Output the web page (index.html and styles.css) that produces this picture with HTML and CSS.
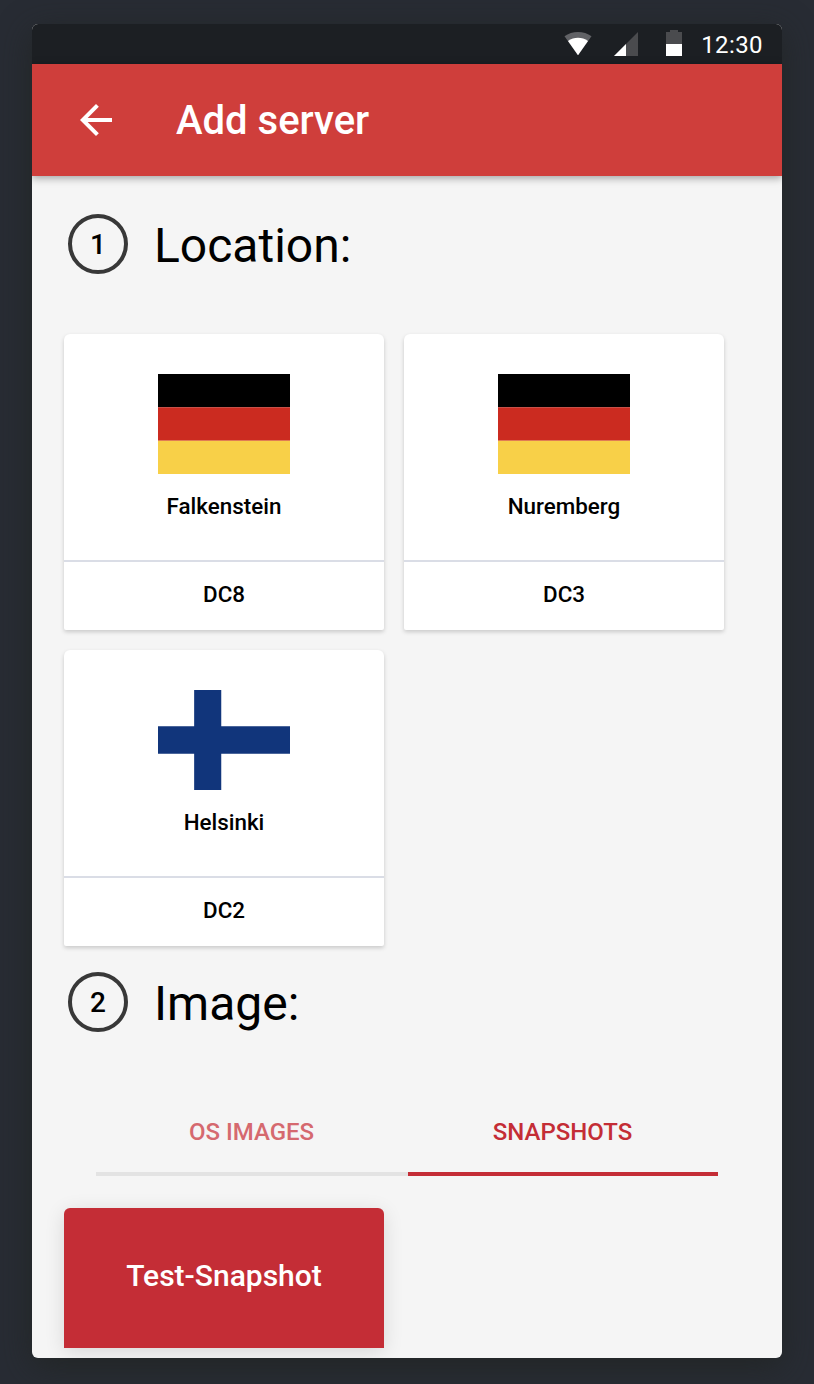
FILE: index.html
```html
<!DOCTYPE html>
<html lang="en">
<head>
<meta charset="utf-8">
<title>Add server</title>
<link rel="stylesheet" href="styles.css">
</head>
<body>
<main class="phone">
  <div class="status-bar">
    <svg class="icon-wifi" width="28" height="24" viewBox="0 0 28 24" aria-hidden="true">
      <path d="M.5 4.3C8-1.4 20-1.4 27.500 4.300L14 23.200Z" fill="#616266"/>
      <path d="M4 9C10 4.700 18 4.700 24 9L14 23.200Z" fill="#fff"/>
    </svg>
    <svg class="icon-signal" width="24" height="24" viewBox="0 0 24 24" aria-hidden="true">
      <path d="M0 24 24 0V24Z" fill="#4a4b4e"/>
      <path d="M0 24 12 12V24Z" fill="#fff"/>
    </svg>
    <svg class="icon-battery" width="16" height="26" viewBox="0 0 16 26" aria-hidden="true">
      <path d="M4 0H12V2H16V14H0V2H4Z" fill="#4a4b4e"/>
      <path d="M0 14H16V26H0Z" fill="#fff"/>
    </svg>
    <span class="clock">12:30</span>
  </div>
  <header class="app-bar">
    <svg class="back" width="32" height="32" viewBox="0 0 32 32" aria-hidden="true">
      <path d="M32 14H7.660L18.840 2.820 16 0 0 16 16 32 18.820 29.180 7.660 18H32Z" fill="#fff"/>
    </svg>
    <h1 class="title">Add server</h1>
  </header>
  <div class="content">
    <section>
      <h2 class="step"><span class="step-number">1</span><span class="step-label">Location:</span></h2>
      <div class="cards">
        <article class="card">
          <div class="card-body">
            <svg class="flag" width="132" height="100" viewBox="0 0 132 100" aria-hidden="true">
              <path d="M0 0H132V33.330H0Z" fill="#000"/><path d="M0 33.330H132V66.670H0Z" fill="#cb2b20"/><path d="M0 66.670H132V100H0Z" fill="#f8d048"/>
            </svg>
            <span>Falkenstein</span>
          </div>
          <div class="card-foot">DC8</div>
        </article>
        <article class="card">
          <div class="card-body">
            <svg class="flag" width="132" height="100" viewBox="0 0 132 100" aria-hidden="true">
              <path d="M0 0H132V33.330H0Z" fill="#000"/><path d="M0 33.330H132V66.670H0Z" fill="#cb2b20"/><path d="M0 66.670H132V100H0Z" fill="#f8d048"/>
            </svg>
            <span>Nuremberg</span>
          </div>
          <div class="card-foot">DC3</div>
        </article>
        <article class="card">
          <div class="card-body">
            <svg class="flag" width="132" height="100" viewBox="0 0 132 100" aria-hidden="true">
              <path d="M36.150 0H63.250V36.200H132V63.800H63.250V100H36.150V63.800H0V36.200H36.150Z" fill="#11357b"/>
            </svg>
            <span>Helsinki</span>
          </div>
          <div class="card-foot">DC2</div>
        </article>
      </div>
    </section>
    <section>
      <h2 class="step step-image"><span class="step-number">2</span><span class="step-label">Image:</span></h2>
      <div class="tabs">
        <div class="tab">OS IMAGES</div>
        <div class="tab tab-active">SNAPSHOTS</div>
      </div>
      <div class="snapshot">Test-Snapshot</div>
    </section>
  </div>
</main>
</body>
</html>
```
FILE: styles.css
```css
* { box-sizing: border-box; }
body {
  margin: 0;
  height: 1384px;
  padding: 24px 32px 26px;
  overflow: hidden;
  background: #282c34;
  font-family: Roboto, "Liberation Sans", sans-serif;
  color: #000;
}
.phone {
  height: 1334px;
  overflow: hidden;
  background: #f5f5f5;
  border-radius: 6px;
  box-shadow: 0 8px 32px rgba(32, 36, 34, 0.8);
}
.status-bar {
  height: 40px;
  padding-right: 19px;
  display: flex;
  align-items: center;
  justify-content: flex-end;
  background: #1c1f23;
}
.icon-wifi { margin-right: 22px; }
.icon-signal { margin-right: 28px; }
.icon-battery { margin: -3px 19px 0 0; }
.clock {
  color: #fff;
  font-size: 24px;
  letter-spacing: 0.4px;
  line-height: 40px;
  padding-top: 2px;
}
.app-bar {
  height: 112px;
  padding-left: 48px;
  display: flex;
  align-items: center;
  gap: 64px;
  background: #cf3e3b;
  box-shadow: 0 2px 8px rgba(0, 0, 0, 0.36);
}
.title {
  margin: 0;
  padding-top: 2px;
  color: #fff;
  font-size: 40px;
  font-weight: 500;
  line-height: 48px;
}
.content { padding: 38px 32px 0; }
.step {
  margin: 0;
  padding-left: 4px;
  height: 60px;
  display: flex;
  align-items: center;
  gap: 26px;
  font-size: 48px;
  font-weight: 400;
  line-height: 60px;
}
.step-label { padding-top: 4px; }
.step-number {
  width: 60px;
  height: 60px;
  border: 4px solid #383838;
  border-radius: 50%;
  font-size: 28px;
  font-weight: 500;
  line-height: 54px;
  text-align: center;
}
.cards {
  margin-top: 60px;
  display: grid;
  grid-template-columns: 320px 320px;
  gap: 20px;
}
.card {
  height: 296px;
  background: #fff;
  border-radius: 6px 6px 2px 2px;
  box-shadow: 0 2px 4px rgba(0, 0, 0, 0.18);
  font-size: 22.4px;
  font-weight: 500;
  text-align: center;
}
.card-body {
  height: 228px;
  padding-top: 40px;
  display: flex;
  flex-direction: column;
  align-items: center;
  gap: 17px;
  line-height: 30px;
  border-bottom: 2px solid #dadde6;
}
.card-foot { line-height: 65px; }
.step-image { margin-top: 26px; }
.tabs {
  margin: 56px 0 32px 32px;
  width: 622px;
  display: grid;
  grid-template-columns: 312px 310px;
}
.tab {
  height: 88px;
  padding-right: 1px;
  border-bottom: 4px solid #e3e3e3;
  color: #d5696f;
  font-size: 24px;
  font-weight: 500;
  line-height: 88px;
  text-align: center;
}
.tab-active {
  color: #c42d36;
  border-color: #c42d36;
}
.snapshot {
  width: 320px;
  height: 140px;
  background: #c42d36;
  border-radius: 6px 6px 0 0;
  box-shadow: 0 4px 20px rgba(0, 0, 0, 0.12);
  color: #fff;
  font-size: 30px;
  font-weight: 500;
  line-height: 136px;
  text-align: center;
}
```
